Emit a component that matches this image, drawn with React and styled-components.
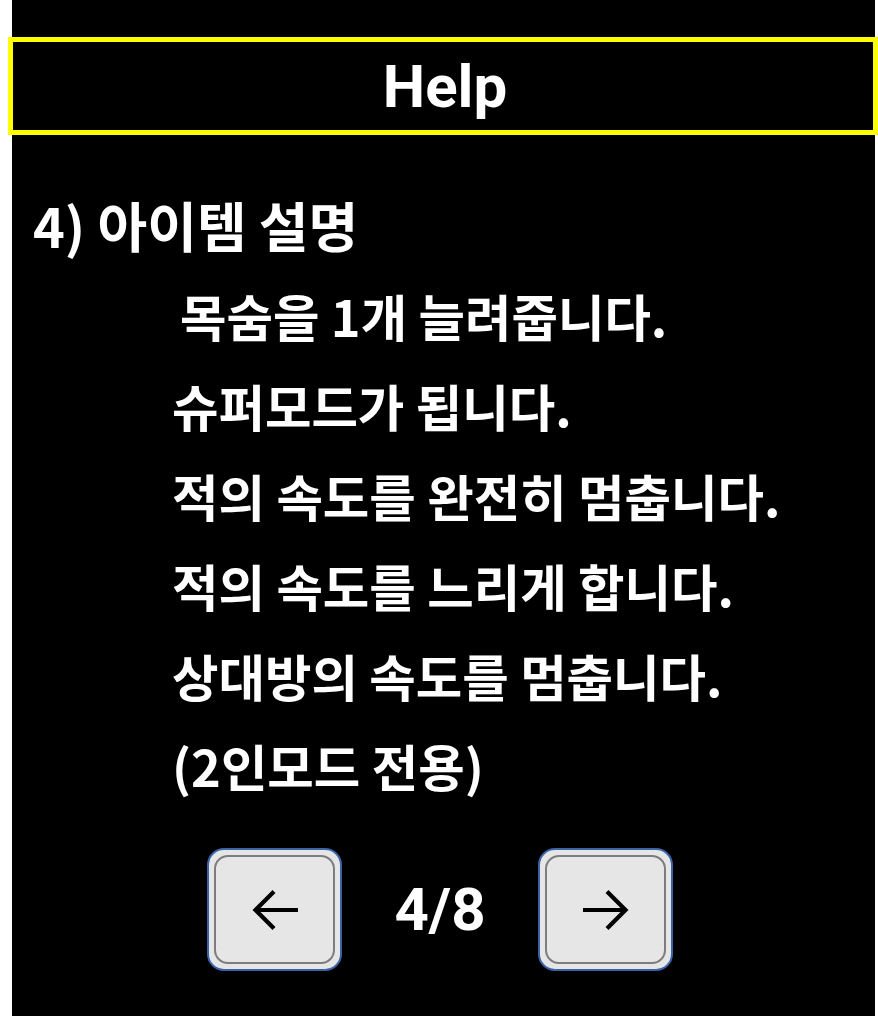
import styled, { createGlobalStyle } from "styled-components";

const GlobalStyle = createGlobalStyle`
  html, body {
    margin: 0;
    padding: 0;
    background: #ffffff;
  }
  body {
    font-family: Roboto, "Noto Sans CJK KR", sans-serif;
    overflow: hidden;
  }
`;

const Panel = styled.div`
  margin-left: 12px;
  width: 863px;
  height: 1016px;
  background: #000000;
  color: #ffffff;
  display: flex;
  flex-direction: column;
  padding-top: 37px;
  box-sizing: border-box;
`;

const Header = styled.div`
  margin: 0 -3px 0 -4px;
  height: 98px;
  box-sizing: border-box;
  border: 5px solid #ffff00;
  display: flex;
  align-items: center;
  justify-content: center;
  font-size: 60px;
  font-weight: 700;
  padding-left: 4px;
`;

const Body = styled.div`
  margin-top: 45px;
  padding-left: 21px;
  display: flex;
  flex-direction: column;
`;

const Line = styled.div`
  font-family: "Noto Sans CJK KR", sans-serif;
  font-size: ${(p) => p.$size || 50.5}px;
  font-weight: 700;
  line-height: 90px;
  height: 90px;
  white-space: pre;
  padding-left: ${(p) => p.$indent}px;
`;

const Pager = styled.div`
  margin-top: 38px;
  display: flex;
  align-items: center;
  justify-content: center;
  padding-right: 7px;
`;

const NavButton = styled.button`
  width: 135px;
  height: 123px;
  box-sizing: border-box;
  padding: 5px;
  border: 2px solid #3b64a8;
  border-radius: 17px;
  background: #e6e6e6;
  display: flex;
  cursor: pointer;
`;

const NavInner = styled.span`
  flex: 1;
  border: 2px solid #7d7d7d;
  border-radius: 14px;
  display: flex;
  align-items: center;
  justify-content: center;
`;

const PageText = styled.div`
  width: 196px;
  text-align: center;
  font-size: 60px;
  font-weight: 700;
`;

const Arrow = ({ dir }) => (
  <svg width="48" height="42" viewBox="0 0 48 42" fill="none">
    <g
      stroke="#000"
      strokeWidth="4.2"
      transform={dir === "right" ? "translate(48 0) scale(-1 1)" : undefined}
    >
      <path d="M47 21H5" />
      <path d="M23 2.5L4.5 21L23 39.5" />
    </g>
  </svg>
);

const lines = [
  { text: "목숨을 1개 늘려줍니다.", indent: 147 },
  { text: "슈퍼모드가 됩니다.", indent: 139 },
  { text: "적의 속도를 완전히 멈춥니다.", indent: 139 },
  { text: "적의 속도를 느리게 합니다.", indent: 139 },
  { text: "상대방의 속도를 멈춥니다.", indent: 139 },
  { text: "(2인모드 전용)", indent: 139 },
];

export default function App() {
  return (
    <>
      <GlobalStyle />
      <Panel>
        <Header>Help</Header>
        <Body>
          <Line $indent={0} $size={54}>
            4) 아이템 설명
          </Line>
          {lines.map((l, i) => (
            <Line key={i} $indent={l.indent}>
              {l.text}
            </Line>
          ))}
        </Body>
        <Pager>
          <NavButton>
            <NavInner>
              <Arrow dir="left" />
            </NavInner>
          </NavButton>
          <PageText>4/8</PageText>
          <NavButton>
            <NavInner>
              <Arrow dir="right" />
            </NavInner>
          </NavButton>
        </Pager>
      </Panel>
    </>
  );
}
